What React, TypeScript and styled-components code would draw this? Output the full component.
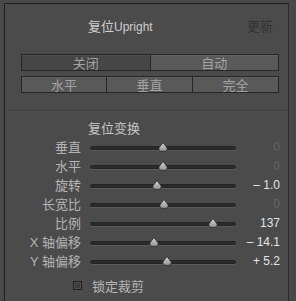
import React from "react";
import styled, { createGlobalStyle } from "styled-components";

const Global = createGlobalStyle`
  html, body { margin: 0; padding: 0; background: #4a4a4a; }
  body { width: 296px; height: 301px; overflow: hidden; font-family: "Liberation Sans", "Noto Sans CJK SC", sans-serif; }
`;

const Page = styled.div`
  width: 296px;
  height: 301px;
  padding: 3px 0 0 4px;
  box-sizing: border-box;
  background: #494949;
`;

const Panel = styled.div`
  width: 285px;
  height: 298px;
  box-sizing: border-box;
  border-left: 1px solid #1f1f1f;
  border-top: 1px solid #1f1f1f;
  border-right: 1px solid #2c2c2c;
  background: #4b4b4b;
  display: flex;
  flex-direction: column;
`;

const Header = styled.div`
  display: flex;
  align-items: center;
  height: 14px;
  margin-top: 14px;
  padding-left: 83px;
  padding-right: 15px;
  justify-content: space-between;
`;

const Title = styled.span`
  font-size: 13px;
  color: #cfcfcf;
  font-family: "Noto Sans CJK SC", sans-serif;
  span { font-family: "Liberation Sans", sans-serif; font-size: 12px; }
`;

const Update = styled.span`
  font-size: 13px;
  color: #333333;
  font-family: "Noto Sans CJK SC", sans-serif;
`;

const ButtonGroup = styled.div`
  margin: 22px 0 0 16px;
  width: 258px;
  display: flex;
  flex-direction: column;
  gap: 5px;
`;

const ButtonRow = styled.div`
  display: flex;
  height: 17px;
`;

const Seg = styled.div<{ $dark?: boolean; $first?: boolean; $w?: number }>`
  flex: ${(p) => (p.$w ? `0 0 ${p.$w}px` : "1")};
  box-sizing: border-box;
  border: 1px solid #262626;
  border-left-width: ${(p) => (p.$first ? "1px" : "0")};
  background: ${(p) => (p.$dark ? "#464646" : "#595959")};
  color: #a3a3a3;
  font-family: "Noto Sans CJK SC", sans-serif;
  font-size: 13px;
  line-height: 15px;
  text-align: center;
  box-shadow: inset 0 1px 0 ${(p) => (p.$dark ? "#4e4e4e" : "#636363")};
`;

const Separator = styled.div`
  margin: 17px 0 0 3px;
  width: 280px;
  height: 1px;
  background: #404040;
  border-bottom: 1px solid #505050;
`;

const SectionTitle = styled.div`
  margin-top: 8px;
  padding-left: 83px;
  height: 16px;
  line-height: 16px;
  font-size: 13px;
  color: #c6c6c6;
  font-family: "Noto Sans CJK SC", sans-serif;
`;

const Sliders = styled.div`
  margin-top: 2px;
  display: flex;
  flex-direction: column;
`;

const SliderRow = styled.div`
  display: grid;
  grid-template-columns: 76px 155px 44px;
  height: 19px;
  align-items: center;
`;

const Label = styled.div`
  text-align: right;
  font-size: 13px;
  line-height: 19px;
  color: #b4b4b4;
  font-family: "Liberation Sans", "Noto Sans CJK SC", sans-serif;
  white-space: nowrap;
`;

const TrackCell = styled.div`
  position: relative;
  padding-left: 9px;
  height: 19px;
  display: flex;
  align-items: center;
`;

const Track = styled.div`
  width: 146px;
  height: 4px;
  box-sizing: border-box;
  border-radius: 2px;
  background: #2b2b2b;
  border: 1px solid #242424;
  box-shadow: 0 1px 0 #5c5c5c;
`;

const Thumb = styled.svg`
  position: absolute;
  top: 4px;
  width: 10px;
  height: 10px;
  margin-left: -5px;
`;

const Value = styled.div<{ $dim?: boolean }>`
  text-align: right;
  font-size: 12px;
  line-height: 19px;
  color: ${(p) => (p.$dim ? "#666666" : "#e4e4e4")};
  font-family: "Liberation Sans", sans-serif;
  white-space: nowrap;
`;

const CheckRow = styled.div`
  display: flex;
  align-items: center;
  margin-top: 4px;
  padding-left: 68px;
  gap: 10px;
  height: 20px;
`;

const Box = styled.div`
  width: 9px;
  height: 9px;
  box-sizing: border-box;
  border: 1px solid #1e1e1e;
  background: #3c3c3c;
  box-shadow: inset 0 0 0 1px #4f4f4f;
`;

const CheckLabel = styled.span`
  font-size: 13px;
  color: #b8b8b8;
  font-family: "Noto Sans CJK SC", sans-serif;
`;

const sliders = [
  { label: "垂直", pos: 163, value: "0", dim: true },
  { label: "水平", pos: 163, value: "0", dim: true },
  { label: "旋转", pos: 157, value: "– 1.0", dim: false },
  { label: "长宽比", pos: 164, value: "0", dim: true },
  { label: "比例", pos: 213, value: "137", dim: false },
  { label: "X 轴偏移", pos: 154, value: "– 14.1", dim: false },
  { label: "Y 轴偏移", pos: 167, value: "+ 5.2", dim: false },
];

function ThumbIcon({ left }: { left: number }) {
  return (
    <Thumb style={{ left }} viewBox="0 0 10 10">
      <defs>
        <linearGradient id="tg" x1="0" y1="0" x2="0" y2="1">
          <stop offset="0" stopColor="#d4d4d4" />
          <stop offset="1" stopColor="#929292" />
        </linearGradient>
      </defs>
      <path
        d="M5 0.5 L8.6 5.2 Q9.6 6.6 9 8 Q8.4 9.4 5 9.4 Q1.6 9.4 1 8 Q0.4 6.6 1.4 5.2 Z"
        fill="url(#tg)"
        stroke="#2a2a2a"
        strokeWidth="0.8"
      />
    </Thumb>
  );
}

export default function App() {
  return (
    <>
      <Global />
      <Page>
        <Panel>
          <Header>
            <Title>
              复位<span>Upright</span>
            </Title>
            <Update>更新</Update>
          </Header>
          <ButtonGroup>
            <ButtonRow>
              <Seg $first $dark>关闭</Seg>
              <Seg>自动</Seg>
            </ButtonRow>
            <ButtonRow>
              <Seg $first $w={86}>水平</Seg>
              <Seg $w={86}>垂直</Seg>
              <Seg>完全</Seg>
            </ButtonRow>
          </ButtonGroup>
          <Separator />
          <SectionTitle>复位变换</SectionTitle>
          <Sliders>
            {sliders.map((s) => (
              <SliderRow key={s.label}>
                <Label>{s.label}</Label>
                <TrackCell>
                  <Track />
                  <ThumbIcon left={s.pos - 81} />
                </TrackCell>
                <Value $dim={s.dim}>{s.value}</Value>
              </SliderRow>
            ))}
          </Sliders>
          <CheckRow>
            <Box />
            <CheckLabel>锁定裁剪</CheckLabel>
          </CheckRow>
        </Panel>
      </Page>
    </>
  );
}
